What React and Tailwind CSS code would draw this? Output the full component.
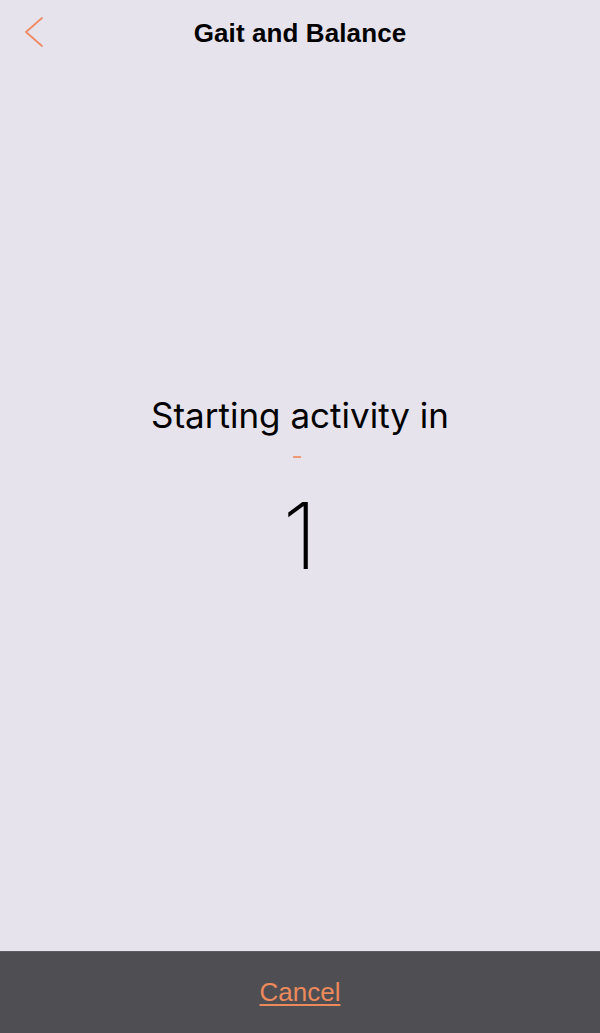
import React from 'react';

/**
 * Countdown screen shown before a gait and balance activity starts
 */
const App = () => {
  const count = 1;

  return (
    <div
      className="h-[1033px] w-full flex flex-col bg-[#e6e3ed] text-black"
      style={{ fontFamily: '"Liberation Sans", Arial, sans-serif' }}
    >
      {/* Navigation bar */}
      <div className="h-[64px] grid grid-cols-[1fr_auto_1fr] items-center px-[24px]">
        <button type="button" className="justify-self-start w-[24px] h-[32px] flex items-center">
          <svg width="20" height="32" viewBox="0 0 20 32" fill="none" stroke="#ee8b62" strokeWidth="1.8" strokeLinecap="round" strokeLinejoin="round">
            <polyline points="18,2 2,16 18,30" />
          </svg>
        </button>
        <h1 className="text-[26px] leading-[31px] font-bold tracking-[0.1px] pt-[2px]">Gait and Balance</h1>
        <div />
      </div>

      {/* Countdown */}
      <div
        className="flex-1 flex flex-col items-center pt-[330px]"
        style={{ fontFamily: 'Inter, "Noto Sans", sans-serif' }}
      >
        <p className="text-[35px] leading-[43px]">Starting activity in</p>
        <div className="w-[8px] h-[2px] bg-[#ef9a77] mt-[19px] -translate-x-[3px]" />
        <div className="mt-[32px] text-[92px] leading-none font-extralight">{count}</div>
      </div>

      {/* Bottom bar */}
      <div className="h-[82px] bg-[#4f4e52] border-t border-[#5e5d61] flex items-center justify-center">
        <button
          type="button"
          className="text-[26px] leading-[31px] text-[#ec8a5c] underline decoration-2 underline-offset-[3px]"
        >
          Cancel
        </button>
      </div>
    </div>
  );
};

export default App;
